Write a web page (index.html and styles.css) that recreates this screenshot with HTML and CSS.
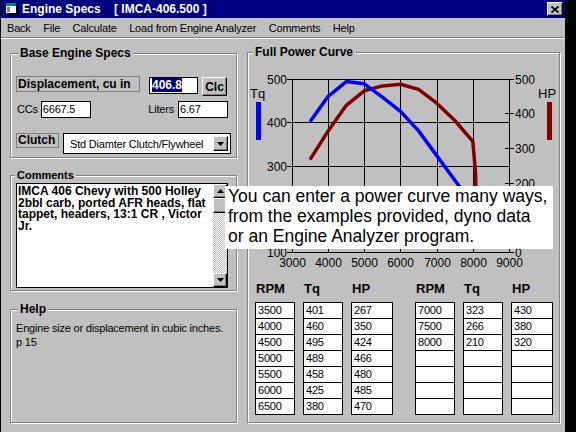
FILE: index.html
```html
<!DOCTYPE html>
<html lang="en">
<head>
    <meta charset="UTF-8">
    <title>Engine Specs</title>
    <link rel="stylesheet" href="styles.css">
</head>
<body>
    <div class="window">
        <div class="titlebar">
            <svg class="app-icon" width="12" height="12" viewBox="0 0 12 12">
                <rect x="2" y="2" width="10" height="10" fill="#000"/>
                <rect x="0" y="0" width="10" height="10" fill="#fff"/>
                <rect x="0" y="0" width="10" height="3" fill="#008080"/>
                <rect x="1" y="4" width="3" height="5" fill="#808080"/>
            </svg>
            <span class="title">Engine Specs    [ IMCA-406.500 ]</span>
            <button class="close-btn">
                <svg width="8" height="7" viewBox="0 0 8 7"><path d="M0.5 0.5L7.5 6.5M7.5 0.5L0.5 6.5" stroke="#000" stroke-width="1.6"/></svg>
            </button>
        </div>

        <div class="menubar">
            <span>Back</span>
            <span>File</span>
            <span>Calculate</span>
            <span>Load from Engine Analyzer</span>
            <span>Comments</span>
            <span>Help</span>
        </div>

        <div class="main">
            <div class="left-col">
                <div class="group base">
                    <div class="group-title">Base Engine Specs</div>
                    <div class="row disp-row">
                        <div class="label-box disp-label">Displacement, cu in</div>
                        <div class="edit disp-edit"><span class="selected">406.8</span></div>
                        <button class="btn clc">Clc</button>
                    </div>
                    <div class="row size-row">
                        <span class="field-name">CCs</span>
                        <div class="edit small">6667.5</div>
                        <span class="field-name liters">Liters</span>
                        <div class="edit small">6.67</div>
                    </div>
                    <div class="row clutch-row">
                        <div class="label-box clutch-label">Clutch</div>
                        <div class="combo">
                            <span>Std Diamter Clutch/Flywheel</span>
                            <div class="combo-btn">
                                <svg width="7" height="4" viewBox="0 0 7 4"><path d="M0 0H7L3.5 4Z" fill="#000"/></svg>
                            </div>
                        </div>
                    </div>
                </div>

                <div class="group comments">
                    <div class="group-title">Comments</div>
                    <div class="memo">
                        <div class="memo-text">IMCA 406 Chevy with 500 Holley<br>2bbl carb, ported AFR heads, flat<br>tappet, headers, 13:1 CR , Victor<br>Jr.</div>
                        <div class="scrollbar">
                            <div class="scroll-btn">
                                <svg width="7" height="4" viewBox="0 0 7 4"><path d="M0 4H7L3.5 0Z" fill="#000"/></svg>
                            </div>
                            <div class="scroll-thumb"></div>
                            <div class="scroll-track"></div>
                            <div class="scroll-btn">
                                <svg width="7" height="4" viewBox="0 0 7 4"><path d="M0 0H7L3.5 4Z" fill="#000"/></svg>
                            </div>
                        </div>
                    </div>
                </div>

                <div class="group help">
                    <div class="group-title">Help</div>
                    <p class="help-text">Engine size or displacement in cubic inches.<br>p 15</p>
                </div>
            </div>

            <div class="right-col">
                <div class="group curve">
                    <div class="group-title">Full Power Curve</div>
                    <svg class="chart" width="311" height="210" viewBox="248 62 311 210">
                        <g stroke="#000" stroke-width="1" fill="none">
                            <path d="M292 79.5H510M292 122.5H510M292 166.5H510M292 209.5H510M292 252.5H510"/>
                            <path d="M292.5 79V253M328.5 79V253M364.5 79V253M400.5 79V253M437.5 79V253M473.5 79V253M509.5 79V253"/>
                            <path d="M287 79.5H292M287 122.5H292M287 166.5H292M287 209.5H292M287 252.5H292"/>
                            <path d="M505 79.5H514M505 113.5H514M505 148.5H514M505 183.5H514M505 217.5H514M505 252.5H514"/>
                        </g>
                        <g class="axis-text" text-anchor="end">
                            <text x="287" y="83.5">500</text>
                            <text x="287" y="126.5">400</text>
                            <text x="287" y="170.5">300</text>
                            <text x="287" y="213.5">200</text>
                            <text x="287" y="256.5">100</text>
                        </g>
                        <g class="axis-text">
                            <text x="515" y="83.5">500</text>
                            <text x="515" y="117.5">400</text>
                            <text x="515" y="152.5">300</text>
                            <text x="515" y="187.5">200</text>
                            <text x="515" y="221.5">100</text>
                            <text x="515" y="256.5">0</text>
                        </g>
                        <g class="axis-text" text-anchor="middle">
                            <text x="292.5" y="266.5">3000</text>
                            <text x="328.5" y="266.5">4000</text>
                            <text x="364.5" y="266.5">5000</text>
                            <text x="400.5" y="266.5">6000</text>
                            <text x="437.5" y="266.5">7000</text>
                            <text x="473.5" y="266.5">8000</text>
                            <text x="509.5" y="266.5">9000</text>
                        </g>
                        <text class="legend-text" x="250" y="97.5">Tq</text>
                        <rect x="256" y="102" width="5" height="38" fill="#0000ff"/>
                        <text class="legend-text" x="538" y="97.5">HP</text>
                        <rect x="547" y="102" width="5" height="38" fill="#800000"/>
                        <polyline fill="none" stroke="#800000" stroke-width="3.5" stroke-linejoin="round"
                            points="310,159.6 328.2,130.9 346.3,105.3 364.3,90.8 382.4,85.9 400.5,84.2 418.6,89.4 436.7,103.2 454.8,120.5 472.8,141.3 475.5,172 477,230"/>
                        <polyline fill="none" stroke="#0000ff" stroke-width="3.5" stroke-linejoin="round"
                            points="310,121.8 328.2,96.3 346.3,81.6 364.3,83.8 382.4,97.2 400.5,111.4 418.6,130.9 436.7,155.6 454.8,180.2 472.8,204.4"/>
                    </svg>

                    <div class="tables">
                        <div class="tgroup">
                            <div class="col">
                                <div class="col-head">RPM</div>
                                <div class="cell">3500</div><div class="cell">4000</div><div class="cell">4500</div><div class="cell">5000</div><div class="cell">5500</div><div class="cell">6000</div><div class="cell">6500</div>
                            </div>
                            <div class="col">
                                <div class="col-head">Tq</div>
                                <div class="cell">401</div><div class="cell">460</div><div class="cell">495</div><div class="cell">489</div><div class="cell">458</div><div class="cell">425</div><div class="cell">380</div>
                            </div>
                            <div class="col wide">
                                <div class="col-head">HP</div>
                                <div class="cell">267</div><div class="cell">350</div><div class="cell">424</div><div class="cell">466</div><div class="cell">480</div><div class="cell">485</div><div class="cell">470</div>
                            </div>
                        </div>
                        <div class="tgroup">
                            <div class="col">
                                <div class="col-head">RPM</div>
                                <div class="cell">7000</div><div class="cell">7500</div><div class="cell">8000</div><div class="cell"></div><div class="cell"></div><div class="cell"></div><div class="cell"></div>
                            </div>
                            <div class="col">
                                <div class="col-head">Tq</div>
                                <div class="cell">323</div><div class="cell">266</div><div class="cell">210</div><div class="cell"></div><div class="cell"></div><div class="cell"></div><div class="cell"></div>
                            </div>
                            <div class="col wide">
                                <div class="col-head">HP</div>
                                <div class="cell">430</div><div class="cell">380</div><div class="cell">320</div><div class="cell"></div><div class="cell"></div><div class="cell"></div><div class="cell"></div>
                            </div>
                        </div>
                    </div>
                </div>
            </div>
        </div>

        <div class="note">You can enter a power curve many ways,<br>from the examples provided, dyno data<br>or an Engine Analyzer program.</div>
    </div>
</body>
</html>
```

FILE: styles.css
```css
body {
    margin: 0;
    background-color: #000;
    font-family: "Liberation Sans", Arial, sans-serif;
    font-size: 11px;
    letter-spacing: -0.2px;
    color: #000;
}
.window {
    position: relative;
    width: 566px;
    height: 432px;
    box-sizing: border-box;
    display: flex;
    flex-direction: column;
    background-color: #c0c0c0;
    border-left: 1px solid #000;
    border-right: 1px solid #000;
    overflow: hidden;
}
.titlebar {
    height: 18px;
    flex-shrink: 0;
    display: flex;
    align-items: center;
    padding: 0 2px 0 5px;
    background-color: #000080;
    color: #fff;
}
.app-icon {
    margin-right: 4px;
}
.title {
    flex: 1;
    font-size: 12px;
    font-weight: bold;
    letter-spacing: 0;
    white-space: pre;
}
.close-btn, .btn, .combo-btn, .scroll-btn, .scroll-thumb {
    box-sizing: border-box;
    background-color: #c0c0c0;
    border: 1px solid;
    border-color: #fff #000 #000 #fff;
    box-shadow: inset -1px -1px 0 #808080;
}
.close-btn {
    width: 16px;
    height: 14px;
    padding: 0;
    display: flex;
    align-items: center;
    justify-content: center;
}
.menubar {
    height: 19px;
    flex-shrink: 0;
    display: flex;
    align-items: center;
    gap: 12.5px;
    padding: 1px 0 0 6px;
    box-sizing: border-box;
    border-bottom: 1px solid #808080;
    height: 20px;
}
.main {
    flex: 1;
    display: flex;
    gap: 10px;
    padding: 13px 0 9px 9px;
    border-top: 1px solid #fff;
}
.left-col {
    width: 227px;
    padding-top: 1px;
    display: flex;
    flex-direction: column;
}
.right-col {
    width: 313px;
    display: flex;
    flex-direction: column;
}
.group {
    box-sizing: border-box;
    border: 1px solid #808080;
    box-shadow: inset 1px 1px 0 #fff, 1px 1px 0 #fff;
}
.group-title {
    width: fit-content;
    margin: -8px 0 0 2px;
    padding: 0 2px;
    background-color: #c0c0c0;
    font-size: 12px;
    font-weight: bold;
    letter-spacing: 0;
    line-height: 14px;
}

/* base engine specs */
.base {
    padding: 0 5px 3px;
}
.row {
    display: flex;
    align-items: flex-start;
}
.disp-row {
    margin-top: 16px;
}
.label-box {
    box-sizing: border-box;
    border: 1px solid #808080;
    font-size: 12px;
    font-weight: bold;
    letter-spacing: 0;
    padding-left: 1px;
}
.disp-label {
    width: 124px;
    height: 16px;
    line-height: 14px;
    margin-right: 9px;
}
.edit {
    box-sizing: border-box;
    height: 17px;
    border: 1px solid #000;
    background-color: #fff;
    line-height: 15px;
    padding-left: 1px;
}
.disp-edit {
    width: 49px;
    margin-top: 1px;
    padding-left: 2px;
}
.selected {
    background-color: #000080;
    color: #fff;
    font-size: 12px;
    font-weight: bold;
    letter-spacing: 0;
}
.clc {
    width: 25px;
    height: 19px;
    margin: 1px 0 0 4px;
    padding: 0;
    font-family: inherit;
    font-size: 12px;
    font-weight: bold;
}
.size-row {
    margin-top: 5px;
    padding-right: 3px;
}
.field-name {
    line-height: 17px;
    margin: 0 3px 0 1px;
}
.liters {
    margin: 0 4px 0 auto;
}
.edit.small {
    width: 50px;
}
.clutch-row {
    margin-top: 15px;
}
.clutch-label {
    width: 43px;
    height: 15px;
    line-height: 13px;
}
.combo {
    box-sizing: border-box;
    width: 168px;
    height: 21px;
    margin-left: 4px;
    display: flex;
    align-items: center;
    padding: 0 2px 0 6px;
    border: 1px solid #000;
    background-color: #fff;
    white-space: nowrap;
}
.combo-btn {
    width: 15px;
    height: 15px;
    margin-left: auto;
    display: flex;
    align-items: center;
    justify-content: center;
}

/* comments */
.comments {
    margin-top: 17px;
    padding: 0 5px 2px;
}
.comments .group-title {
    font-size: 11px;
    line-height: 12px;
    margin: -7px 0 0 -1px;
}
.memo {
    box-sizing: border-box;
    width: 212px;
    height: 105px;
    margin-top: 2px;
    display: flex;
    border: 1px solid #000;
    background-color: #fff;
}
.memo-text {
    flex: 1;
    padding: 2px 0 0 1px;
    font-size: 12px;
    font-weight: bold;
    letter-spacing: 0;
    line-height: 11.7px;
    white-space: nowrap;
    overflow: hidden;
}
.scrollbar {
    width: 14px;
    display: flex;
    flex-direction: column;
}
.scroll-btn {
    height: 14px;
    display: flex;
    align-items: center;
    justify-content: center;
}
.scroll-thumb {
    height: 15px;
}
.scroll-track {
    flex: 1;
    background: repeating-conic-gradient(#c0c0c0 0 25%, #fff 0 50%) 0 0 / 2px 2px;
}

/* help */
.help {
    flex: 1;
    margin-top: 18px;
    padding: 0 5px;
}
.help-text {
    margin: 5px 0 0;
    line-height: 14px;
}

/* power curve */
.curve {
    flex: 1;
}
.curve .group-title {
    margin-left: 5px;
}
.chart {
    display: block;
    margin-top: 3px;
}
.axis-text text {
    font-family: "Liberation Sans", Arial, sans-serif;
    font-size: 12px;
    letter-spacing: 0;
}
.legend-text {
    font-family: "Liberation Sans", Arial, sans-serif;
    font-size: 13px;
    letter-spacing: 0;
}
.tables {
    display: flex;
    gap: 22px;
    margin-top: 10px;
    padding-left: 7px;
}
.tgroup {
    display: flex;
    gap: 8px;
}
.col {
    width: 40px;
}
.col.wide {
    width: 42px;
}
.col-head {
    padding-left: 1px;
    margin-bottom: 6px;
    font-size: 13px;
    font-weight: bold;
    letter-spacing: 0;
    line-height: 14px;
}
.cell {
    box-sizing: border-box;
    height: 17px;
    border: 1px solid #000;
    background-color: #fff;
    padding-left: 2px;
    line-height: 15px;
}
.cell + .cell {
    margin-top: -1px;
}

.note {
    position: absolute;
    left: 224px;
    top: 186px;
    width: 328px;
    height: 63px;
    box-sizing: border-box;
    padding-left: 3px;
    background-color: #fff;
    font-size: 17.5px;
    letter-spacing: 0;
    line-height: 20px;
    white-space: nowrap;
}
```
